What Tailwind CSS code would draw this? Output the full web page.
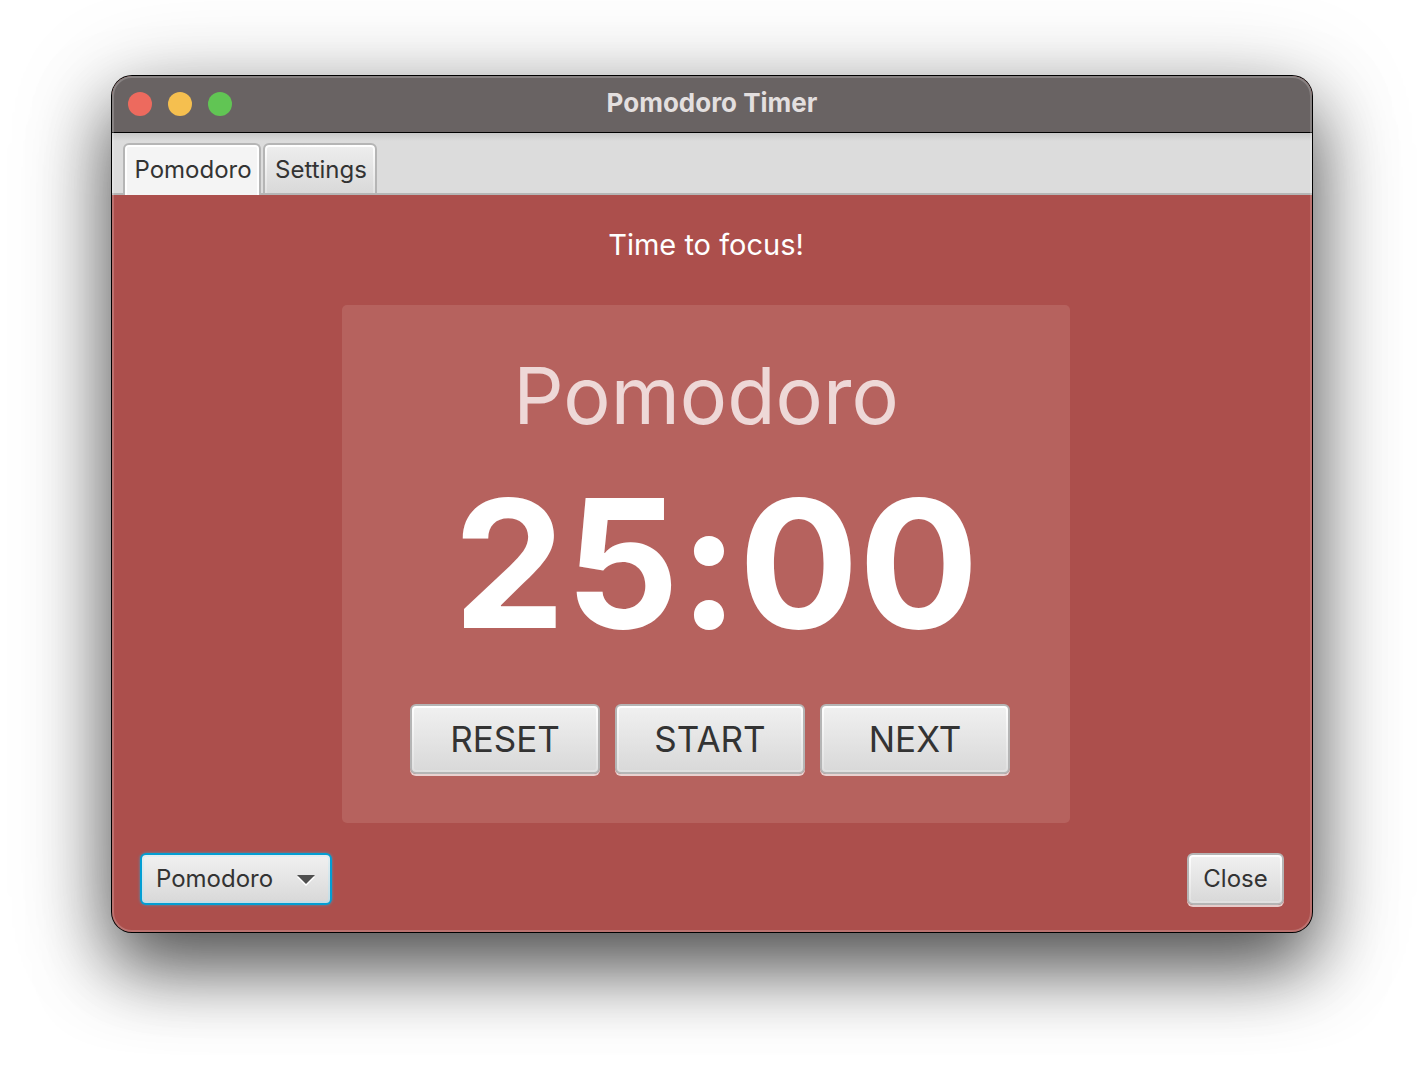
<!DOCTYPE html>
<html lang="en">
<head>
<meta charset="utf-8">
<meta name="viewport" content="width=device-width, initial-scale=1">
<title>Pomodoro Timer</title>
<script src="https://cdn.jsdelivr.net/npm/@tailwindcss/browser@4"></script>
</head>
<body class="min-h-screen overflow-hidden bg-white px-28 pt-19 pb-37 font-['Inter',sans-serif] text-[#333333]">
<div class="relative rounded-[20px] bg-[#ac4f4c] shadow-[0_0_0_1px_#000,0_36px_72px_0px_rgba(0,0,0,0.6),0_16px_100px_0px_rgba(0,0,0,0.25)]">
  <header class="grid h-14 grid-cols-[1fr_auto_1fr] items-center rounded-t-[20px] bg-[#696363] px-4">
    <div class="flex gap-4">
      <button aria-label="Close window" class="size-6 rounded-full bg-[#ed6a5e]"></button>
      <button aria-label="Minimize window" class="size-6 rounded-full bg-[#f5bf4f]"></button>
      <button aria-label="Zoom window" class="size-6 rounded-full bg-[#61c554]"></button>
    </div>
    <h1 class="pb-0.5 text-[26px] leading-8 font-bold text-[#e3dfdf]">Pomodoro Timer</h1>
  </header>

  <nav role="tablist" class="flex h-[63px] items-end gap-0.5 border-t border-black bg-[linear-gradient(#c8c8c8,#dcdcdc_8px)] px-[11px] shadow-[inset_0_-2px_0_#b5b5b5]">
    <button role="tab" aria-selected="true" class="h-[52px] w-[138px] rounded-t-md border-2 border-b-0 border-[#b5b5b5] bg-[#f4f4f4] pl-0.5 text-2xl shadow-[inset_0_2px_0_#fff,inset_2px_0_0_#fff,inset_-2px_0_0_#fff]">Pomodoro</button>
    <button role="tab" aria-selected="false" class="h-[52px] w-[114px] rounded-t-md border-2 border-[#b5b5b5] p-0.5 pb-0 indent-0.5 text-2xl [background:linear-gradient(#ededed,#d9d9d9)_content-box,linear-gradient(#fff,#e2e2e2)_padding-box]">Settings</button>
  </nav>

  <main class="px-7 pt-8 pb-[27px]">
    <div class="flex flex-col items-center pr-3">
      <p class="text-[29px] leading-9 text-white">Time to focus!</p>
      <section class="mt-[42px] flex h-[518px] w-[728px] max-w-full flex-col items-center rounded-[5px] bg-[#b6625e]">
        <h2 class="mt-10 text-[79px] leading-[100px] text-[#eed8d7]">Pomodoro</h2>
        <time class="mt-[34px] ml-5 text-[178px] leading-[170px] font-bold text-white [font-feature-settings:'calt'_0]">25:00</time>
        <div class="mt-[55px] ml-2 flex gap-[15px]">
          <button class="h-[70px] w-[190px] rounded-md border-2 border-transparent p-0.5 text-[35px] shadow-[0_2px_0_#ead2d1] [background:linear-gradient(#f0f0f0,#d9d9d9)_content-box,linear-gradient(#fff,#e0e0e0)_padding-box,linear-gradient(#b5b5b5,#b5b5b5)_border-box]">RESET</button>
          <button class="h-[70px] w-[190px] rounded-md border-2 border-transparent p-0.5 text-[35px] shadow-[0_2px_0_#ead2d1] [background:linear-gradient(#f0f0f0,#d9d9d9)_content-box,linear-gradient(#fff,#e0e0e0)_padding-box,linear-gradient(#b5b5b5,#b5b5b5)_border-box]">START</button>
          <button class="h-[70px] w-[190px] rounded-md border-2 border-transparent p-0.5 text-[35px] shadow-[0_2px_0_#ead2d1] [background:linear-gradient(#f0f0f0,#d9d9d9)_content-box,linear-gradient(#fff,#e0e0e0)_padding-box,linear-gradient(#b5b5b5,#b5b5b5)_border-box]">NEXT</button>
        </div>
      </section>
    </div>
    <div class="mt-[30px] flex items-start justify-between">
      <div class="relative h-[52px] w-[192px] rounded-md border-2 border-transparent p-0.5 shadow-[0_0_3px_0px_#4a93b8] [background:linear-gradient(#f0f0f0,#d9d9d9)_content-box,linear-gradient(#e2eef2,#c5dde6)_padding-box,linear-gradient(#039ed3,#039ed3)_border-box]">
        <select aria-label="Timer mode" class="h-full w-full appearance-none bg-transparent pl-3 text-2xl outline-none">
          <option>Pomodoro</option>
          <option>Short Break</option>
          <option>Long Break</option>
        </select>
        <svg class="pointer-events-none absolute top-5 right-[15px]" width="18" height="11" viewBox="0 0 18 11"><path d="M0 2h18l-9 9z" fill="#fff"/><path d="M0 0h18l-9 9z" fill="#4f4f4f"/></svg>
      </div>
      <button class="h-[52px] w-[97px] rounded-md border-2 border-transparent p-0.5 text-2xl shadow-[0_2px_0_#e6cccb] [background:linear-gradient(#f0f0f0,#d9d9d9)_content-box,linear-gradient(#fff,#e0e0e0)_padding-box,linear-gradient(#b5b5b5,#b5b5b5)_border-box]">Close</button>
    </div>
  </main>
  <div class="pointer-events-none absolute inset-0 rounded-[20px] border-2 border-white/20"></div>
</div>
</body>
</html>
